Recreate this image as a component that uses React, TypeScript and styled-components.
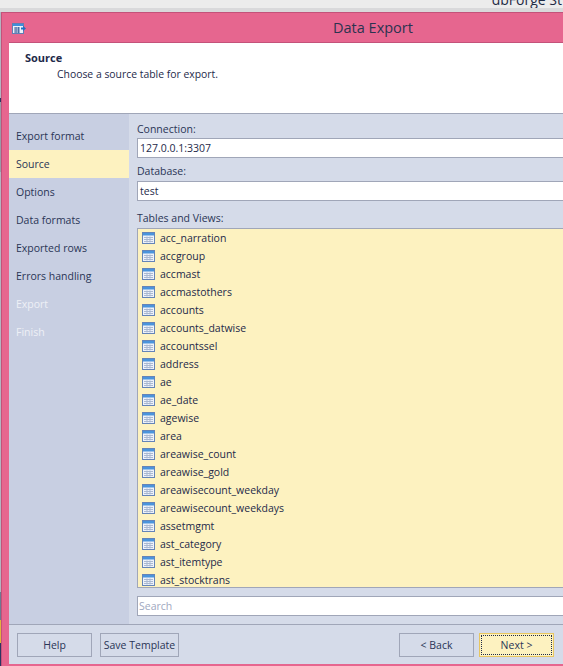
import React from 'react';
import styled, { createGlobalStyle } from 'styled-components';

const GlobalStyle = createGlobalStyle`
  html, body {
    margin: 0;
    padding: 0;
    background: #ececec;
  }
  body {
    font-family: "Open Sans", "Noto Sans", "Liberation Sans", sans-serif;
    color: #1e2a4a;
  }
`;

const Page = styled.div`
  position: relative;
  width: 563px;
  height: 666px;
  overflow: hidden;
  display: flex;
  flex-direction: column;
`;

const ParentTitle = styled.div`
  height: 8px;
  display: flex;
  justify-content: flex-end;
  align-items: flex-end;
  overflow: hidden;
  padding-right: 1px;
  font-size: 14px;
  line-height: 17px;
  color: #1f2a44;
  white-space: nowrap;
`;

const ParentEdge = styled.div`
  height: 4px;
  background: #d9d9db;
`;

const Desk = styled.div`
  flex: 1;
  display: flex;
  min-height: 0;
`;

const DeskStrip = styled.div`
  width: 1px;
  flex: none;
  background: linear-gradient(
    to bottom,
    #b4b4c0 0,
    #b4b4c0 86px,
    #2c3560 86px,
    #2c3560 90px,
    #9a9aa6 90px,
    #9a9aa6 160px,
    #b4b4c0 160px,
    #b4b4c0 580px,
    #6f7890 580px,
    #6f7890 608px,
    #e2b23e 608px,
    #e2b23e 631px,
    #2c3560 631px
  );
`;

const Dialog = styled.div`
  width: 620px;
  flex: none;
  display: flex;
  flex-direction: column;
  background: #e6668f;
  border: 1px solid #c4527a;
  border-bottom: 0;
  padding: 0 0 2px 7px;
  box-sizing: border-box;
`;

const TitleBar = styled.div`
  position: relative;
  height: 29px;
  flex: none;
  display: flex;
  align-items: center;
  padding-left: 324px;
  box-sizing: border-box;
`;

const TitleIcon = styled.svg`
  position: absolute;
  left: 3px;
  top: 10px;
`;

const TitleText = styled.div`
  font-size: 14.5px;
  color: #2b3350;
`;

const Body = styled.div`
  flex: 1;
  display: flex;
  flex-direction: column;
  min-height: 0;
  border-top: 1px solid #c4527a;
  background: #d5dbe9;
`;

const Header = styled.div`
  height: 71px;
  flex: none;
  box-sizing: border-box;
  background: #ffffff;
  border-bottom: 1px solid #a0a6b8;
  padding: 7px 16px;
`;

const HeaderTitle = styled.div`
  font-size: 11px;
  line-height: 15px;
  font-weight: 700;
  color: #1e2a4a;
`;

const HeaderText = styled.div`
  font-size: 10.4px;
  line-height: 15px;
  margin: 2px 0 0 32px;
  color: #1e2a4a;
`;

const Middle = styled.div`
  flex: 1;
  display: flex;
  min-height: 0;
`;

const Sidebar = styled.div`
  width: 120px;
  flex: none;
  background: #c8cfe2;
  padding-top: 8px;
  box-sizing: border-box;
`;

const Step = styled.div<{ $active?: boolean; $disabled?: boolean }>`
  height: 28px;
  box-sizing: border-box;
  display: flex;
  align-items: center;
  padding-left: 7px;
  font-size: 10.5px;
  background: ${({ $active }) => ($active ? '#fdf2c0' : 'transparent')};
  color: ${({ $disabled }) => ($disabled ? '#eef0f6' : '#2a3556')};
`;

const Content = styled.div`
  flex: 1;
  display: flex;
  flex-direction: column;
  padding: 8px 0 8px 8px;
  min-width: 0;
`;

const Label = styled.div<{ $top?: number; $bottom?: number }>`
  font-size: 10.5px;
  line-height: 15px;
  color: #2a3556;
  margin: ${({ $top }) => $top ?? 0}px 0 ${({ $bottom }) => $bottom ?? 0}px;
`;

const Input = styled.div`
  height: 20px;
  flex: none;
  box-sizing: border-box;
  background: #ffffff;
  border: 1px solid #a0a6b8;
  border-right: 0;
  margin-bottom: 5px;
  padding-left: 2px;
  display: flex;
  align-items: center;
  font-size: 10.5px;
  color: #1e2a4a;
`;

const List = styled.div`
  height: 360px;
  flex: none;
  box-sizing: border-box;
  margin-bottom: 8px;
  background: #fdf2c0;
  border: 1px solid #a0a6b8;
  border-right: 0;
  overflow: hidden;
`;

const Row = styled.div`
  height: 18px;
  display: flex;
  align-items: center;
  gap: 5px;
  padding-left: 4px;
  font-size: 10.5px;
  color: #1e2a4a;
`;

const SearchBox = styled(Input)`
  margin: 0;
  color: #a0a8c0;
  padding-left: 1px;
`;

const Footer = styled.div`
  height: 40px;
  flex: none;
  box-sizing: border-box;
  border-top: 1px solid #a0a6b8;
  display: flex;
  align-items: center;
  padding-left: 8px;
  gap: 8px;
`;

const NavButtons = styled.div`
  display: flex;
  gap: 5px;
  margin-left: 212px;
`;

const Button = styled.div<{ $wide?: number; $focused?: boolean }>`
  position: relative;
  width: ${({ $wide }) => $wide ?? 75}px;
  height: 24px;
  box-sizing: border-box;
  display: flex;
  align-items: center;
  justify-content: center;
  font-size: 10.5px;
  color: #2a3556;
  border: 1px solid ${({ $focused }) => ($focused ? '#e8c660' : '#a0a6b8')};
  background: ${({ $focused }) => ($focused ? '#fdf2c0' : 'transparent')};
  ${({ $focused }) =>
    $focused
      ? `&::after {
    content: '';
    position: absolute;
    inset: 1px;
    border: 1px dotted #1e2a4a;
  }`
      : ''}
`;

const RowIcon = styled.svg`
  flex: none;
`;

const tables = [
  'acc_narration',
  'accgroup',
  'accmast',
  'accmastothers',
  'accounts',
  'accounts_datwise',
  'accountssel',
  'address',
  'ae',
  'ae_date',
  'agewise',
  'area',
  'areawise_count',
  'areawise_gold',
  'areawisecount_weekday',
  'areawisecount_weekdays',
  'assetmgmt',
  'ast_category',
  'ast_itemtype',
  'ast_stocktrans',
];

const steps = [
  { name: 'Export format' },
  { name: 'Source', active: true },
  { name: 'Options' },
  { name: 'Data formats' },
  { name: 'Exported rows' },
  { name: 'Errors handling' },
  { name: 'Export', disabled: true },
  { name: 'Finish', disabled: true },
];

function TableIcon() {
  return (
    <RowIcon width="13" height="12" viewBox="0 0 13 12">
      <rect x="0.5" y="0.5" width="12" height="11" fill="#eef2fa" stroke="#6484b8" />
      <rect x="1" y="1" width="11" height="2.5" fill="#4a94dc" />
      <path d="M2 5.5h9M2 7.5h9M2 9.5h9M5 4.5v6M8 4.5v6" stroke="#a9b8d2" strokeWidth="1" fill="none" />
    </RowIcon>
  );
}

export default function App(): JSX.Element {
  return (
    <Page>
      <GlobalStyle />
      <ParentTitle>dbForge St</ParentTitle>
      <ParentEdge />
      <Desk>
        <DeskStrip />
        <Dialog>
          <TitleBar>
            <TitleIcon width="14" height="11" viewBox="0 0 14 11">
              <rect x="0.5" y="0.5" width="11" height="10" fill="#eef2fa" stroke="#5f7fb5" />
              <rect x="1" y="1" width="10" height="2" fill="#3f8fdc" />
              <path d="M2 5h6M2 7h6M2 9h6M4 4v6M6.5 4v6" stroke="#4c6ea6" strokeWidth="1" fill="none" />
              <path d="M9 4.5h2V3l3 2.5L11 8V6.5H9z" fill="#1f6fc4" />
            </TitleIcon>
            <TitleText>Data Export</TitleText>
          </TitleBar>
          <Body>
            <Header>
              <HeaderTitle>Source</HeaderTitle>
              <HeaderText>Choose a source table for export.</HeaderText>
            </Header>
            <Middle>
              <Sidebar>
                {steps.map((step) => (
                  <Step key={step.name} $active={step.active} $disabled={step.disabled}>
                    {step.name}
                  </Step>
                ))}
              </Sidebar>
              <Content>
                <Label $bottom={1}>Connection:</Label>
                <Input>127.0.0.1:3307</Input>
                <Label $top={1} $bottom={2}>Database:</Label>
                <Input>test</Input>
                <Label $top={5} $bottom={2}>Tables and Views:</Label>
                <List>
                  {tables.map((name) => (
                    <Row key={name}>
                      <TableIcon />
                      {name}
                    </Row>
                  ))}
                </List>
                <SearchBox>Search</SearchBox>
              </Content>
            </Middle>
            <Footer>
              <Button>Help</Button>
              <Button $wide={79}>Save Template</Button>
              <NavButtons>
                <Button>&lt; Back</Button>
                <Button $focused>Next &gt;</Button>
              </NavButtons>
            </Footer>
          </Body>
        </Dialog>
      </Desk>
    </Page>
  );
}
